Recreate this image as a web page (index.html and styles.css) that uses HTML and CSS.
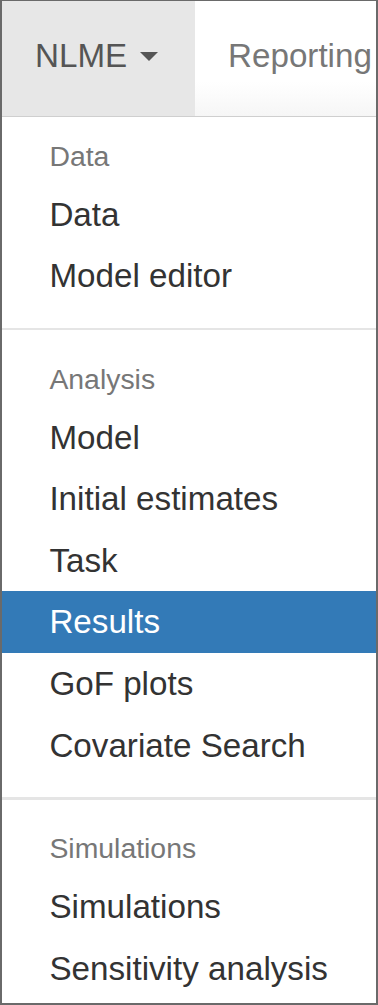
FILE: index.html
```html
<!DOCTYPE html>
<html lang="en">
<head>
<meta charset="utf-8">
<title>NLME menu</title>
<link rel="stylesheet" href="styles.css">
</head>
<body>
<div class="frame">
  <nav class="navbar">
    <a class="nav-link nav-link-open" href="#">NLME <span class="caret"></span></a>
    <a class="nav-link" href="#">Reporting</a>
  </nav>
  <ul class="dropdown-menu">
    <li class="dropdown-header">Data</li>
    <li><a class="menu-item" href="#">Data</a></li>
    <li><a class="menu-item" href="#">Model editor</a></li>
    <li class="divider"></li>
    <li class="dropdown-header">Analysis</li>
    <li><a class="menu-item" href="#">Model</a></li>
    <li><a class="menu-item" href="#">Initial estimates</a></li>
    <li><a class="menu-item" href="#">Task</a></li>
    <li><a class="menu-item menu-item-active" href="#">Results</a></li>
    <li><a class="menu-item" href="#">GoF plots</a></li>
    <li><a class="menu-item" href="#">Covariate Search</a></li>
    <li class="divider"></li>
    <li class="dropdown-header">Simulations</li>
    <li><a class="menu-item" href="#">Simulations</a></li>
    <li><a class="menu-item" href="#">Sensitivity analysis</a></li>
  </ul>
</div>
</body>
</html>
```

FILE: styles.css
```css
* {
  box-sizing: border-box;
}

html, body {
  margin: 0;
  padding: 0;
  background: #ffffff;
}

body {
  font-family: "Liberation Sans", Arial, sans-serif;
  color: #333333;
}

.frame {
  width: 378px;
  height: 1005px;
  border-style: solid;
  border-color: #6a6a6a;
  border-width: 1px 2px 2px 2px;
  overflow: hidden;
  background: #ffffff;
}

.navbar {
  display: flex;
  height: 116px;
  border-bottom: 1px solid #cfcfcf;
  background: linear-gradient(to bottom, #ffffff 0%, #ffffff 70%, #f6f6f6 100%);
}

.nav-link {
  display: block;
  padding: 31px 33px 0 33px;
  font-size: 33.2px;
  line-height: 47.4px;
  color: #777777;
  text-decoration: none;
  white-space: nowrap;
}

.nav-link-open {
  width: 193px;
  flex: none;
  background: #e7e7e7;
  color: #555555;
}

.caret {
  display: inline-block;
  width: 0;
  height: 0;
  margin-left: 4px;
  vertical-align: middle;
  border-top: 9.5px solid #555555;
  border-left: 9.5px solid transparent;
  border-right: 9.5px solid transparent;
  position: relative;
  top: -2px;
}

.dropdown-menu {
  list-style: none;
  margin: 0;
  padding: 11.85px 0;
  width: 400px;
}

.dropdown-header {
  display: block;
  padding: 7.1px 47.4px;
  font-size: 28.4px;
  line-height: 40.6px;
  color: #777777;
  white-space: nowrap;
}

.menu-item {
  display: block;
  padding: 7.1px 47.4px;
  font-size: 33.2px;
  line-height: 47.4px;
  color: #333333;
  text-decoration: none;
  white-space: nowrap;
}

.menu-item-active {
  background: #337ab7;
  color: #ffffff;
}

.divider {
  height: 2.37px;
  margin: 21.3px 0;
  background: #e5e5e5;
}
```
